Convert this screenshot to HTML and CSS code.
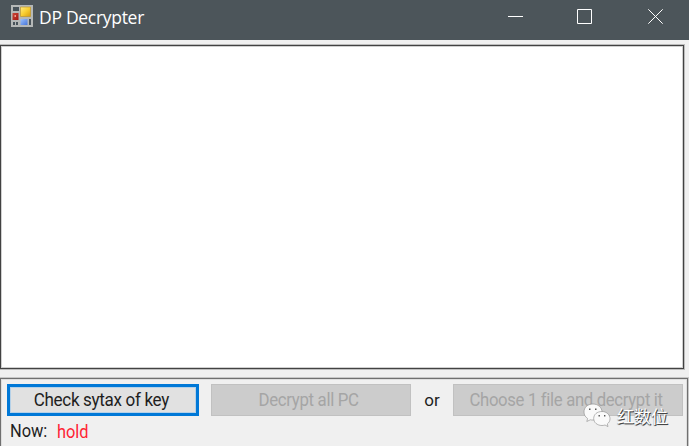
FILE: index.html
```
<!DOCTYPE html>
<html lang="en">
<head>
<meta charset="utf-8">
<title>DP Decrypter</title>
<link rel="stylesheet" href="styles.css">
</head>
<body>
<div class="window">
  <header class="titlebar">
    <svg class="app-icon" width="22" height="22" viewBox="0 0 22 22">
      <defs>
        <linearGradient id="gold" x2="1" y2="1"><stop stop-color="#ffeb83"/><stop offset=".5" stop-color="#f9cf32"/><stop offset="1" stop-color="#d79b0d"/></linearGradient>
        <linearGradient id="red" x2="1" y2="1"><stop stop-color="#c9483a"/><stop offset="1" stop-color="#a51510"/></linearGradient>
        <linearGradient id="blue" x2="1" y2="1"><stop stop-color="#9cc1fa"/><stop offset="1" stop-color="#4777dd"/></linearGradient>
      </defs>
      <path fill="#b5b8b7" d="M0 0h22v22H0z"/>
      <path fill="#48535a" d="M2 2h6v4H2zM2 17h2v3H2zM5 17h2v3H5zM18 14h2v6h-2z"/>
      <path fill="url(#gold)" stroke="#bd952d" stroke-width=".7" d="M9.500 2h10v9.500h-10z"/>
      <path fill="url(#red)" d="M1.500 8H7.500v7h-6z"/>
      <path fill="#ef9b8d" d="M3.500 10h1.500v2H3.500z"/>
      <path fill="url(#blue)" d="M9.500 14h7v6h-7z"/>
    </svg>
    <h1 class="title">DP Decrypter</h1>
    <div class="controls">
      <svg width="15" height="16" viewBox="0 0 15 16"><path d="M0 7.500h15"/></svg>
      <svg width="15" height="16" viewBox="0 0 15 16"><path d="M.5.500h14v14H.5z"/></svg>
      <svg width="15" height="16" viewBox="0 0 15 16"><path d="M.3.300l14.400 14.400M14.700.300L.3 14.700"/></svg>
    </div>
  </header>
  <main class="output"></main>
  <section class="panel">
    <div class="actions">
      <button class="btn primary"><span class="label t-check">Check sytax of key</span></button>
      <button class="btn all" disabled><span class="label t-all">Decrypt all PC</span></button>
      <span class="or">or</span>
      <button class="btn one" disabled><span class="label t-one">Choose 1 file and decrypt it</span></button>
    </div>
    <div class="status"><span class="now">Now:</span><span class="state">hold</span></div>
  </section>
  <div class="watermark">
    <svg width="28" height="25" viewBox="0 0 28 25">
      <path class="bubble" d="M10 1C4.500 1 1 4.500 1 9c0 3 1.400 5 3.600 6.500L3.800 18.500l3.500-1.700c1 .3 2 .3 3.200.2C15 17 19 13.500 19 9s-4-8-9-8z"/>
      <path class="bubble" d="M19 8.500c-5 0-8.300 3-8.300 7s3.600 7 8.300 7c1.200 0 2-.2 3-.5l3 1.600-.7-2.700c1.800-1.300 2.700-3 2.700-5.200 0-4-3.500-7.200-8-7.200z"/>
      <path class="eyes" d="M6 5.500h1.500V7H6zM12 5.500h1.500V7H12zM15.500 12h1.400v1.400h-1.400zM21 12h1.400v1.400H21z"/>
    </svg>
    <span>红数位</span>
  </div>
</div>
</body>
</html>
```
FILE: styles.css
```
* { box-sizing: border-box; }
body { margin: 0; overflow: hidden; font-family: Roboto, "Liberation Sans", sans-serif; }
.window { position: relative; width: 689px; height: 446px; background: #f0f0f0; overflow: hidden; }
.titlebar { display: flex; align-items: flex-start; height: 40px; padding: 5px 26px 0 11px; background: #4c555a; color: #fff; }
.app-icon { flex: none; }
.title { margin: 0 0 0 6px; font: 400 18px/25px "Open Sans", "Noto Sans", sans-serif; letter-spacing: -.3px; white-space: nowrap; transform: scaleX(.972); transform-origin: left; }
.controls { display: flex; gap: 55px; margin: 4px 0 0 auto; }
.controls svg { fill: none; stroke: #fff; stroke-width: 1; }
.controls svg:nth-child(-n+2) { margin-right: -1px; }
.controls svg:nth-child(2) { margin-right: 1px; }
.output { width: 684px; height: 324px; margin-top: 5px; background: #fff; border: 1px solid #424242; box-shadow: 0 0 0 1px #bcbcbc, inset 0 0 0 1px #d0d0d0; }
.panel { width: 688px; height: 80px; margin-top: 9px; padding: 5px 4px 0 6px; border: 1px solid #707070; box-shadow: 0 0 0 1px #c8c8c8, inset 0 0 0 1px #dedede; }
.actions { display: flex; align-items: center; height: 32px; }
.btn { display: flex; align-items: center; justify-content: center; flex: none; height: 32px; padding: 0; font: 400 18px/20px Roboto, sans-serif; color: #1e1e1e; white-space: nowrap; }
.primary { width: 192px; background: #e1e1e1; border: 3px solid #0078d7; box-shadow: inset 0 0 0 1px #b5d1e8; }
.btn:disabled { color: #a5a5a5; background: #ccc; border: 1px solid #c1c1c1; }
.all { width: 200px; margin-left: 12px; }
.one { width: 230px; }
.or { width: 42px; text-align: center; font-size: 17px; color: #1e1e1e; }
.label { letter-spacing: -.35px; }
.t-check { transform: translateX(-2px) scaleX(.947); }
.t-all { transform: translateX(-2px) scaleX(.934); }
.t-one { transform: translateX(-2px) scaleX(.928); }
.status { display: flex; padding: 5px 0 0 3px; font-size: 18px; line-height: 20px; color: #1e1e1e; }
.now { width: 47px; }
.now, .state { transform: scaleX(.91); transform-origin: left; }
.state { color: #ff2434; padding-top: 1px; }
.watermark { position: absolute; left: 583px; top: 403px; display: flex; align-items: center; gap: 6px; height: 25px; font: 400 17px/25px "Noto Sans CJK SC", sans-serif; color: #fff; text-shadow: 1px 1px 0 #454545, 0 1px 1px #666; white-space: nowrap; }
.bubble { fill: #fafafa; stroke: #888; stroke-width: .6; }
.eyes { fill: #555; }
```
